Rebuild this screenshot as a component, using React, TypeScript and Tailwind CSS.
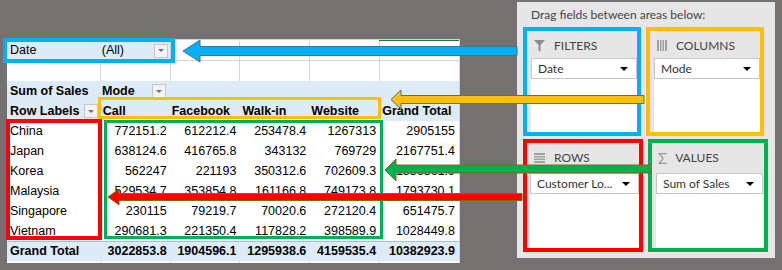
import React from "react";

const rows = [
  { name: "China", vals: ["772151.2", "612212.4", "253478.4", "1267313", "2905155"] },
  { name: "Japan", vals: ["638124.6", "416765.8", "343132", "769729", "2167751.4"] },
  { name: "Korea", vals: ["562247", "221193", "350312.6", "702609.3", "1836361.9"] },
  { name: "Malaysia", vals: ["529534.7", "353854.8", "161166.8", "749173.8", "1793730.1"] },
  { name: "Singapore", vals: ["230115", "79219.7", "70020.6", "272120.4", "651475.7"] },
  { name: "Vietnam", vals: ["290681.3", "221350.4", "117828.2", "398589.9", "1028449.8"] },
];

const totals = ["3022853.8", "1904596.1", "1295938.6", "4159535.4", "10382923.9"];

function DropBtn() {
  return (
    <div className="w-[14px] h-[14px] border border-[#c6c6c6] bg-[#f3f3f3] flex items-center justify-center">
      <div className="w-0 h-0 border-l-[3px] border-r-[3px] border-t-[3px] border-l-transparent border-r-transparent border-t-[#707070]" />
    </div>
  );
}

function Caret() {
  return <div className="w-0 h-0 border-l-[4px] border-r-[4px] border-t-[4px] border-l-transparent border-r-transparent border-t-black" />;
}

function FieldItem({ label }: { label: string }) {
  return (
    <div className="h-[21px] border border-[#c6c6c6] bg-white flex items-center justify-between pl-[6px] pr-[8px] text-[12px] text-[#333]">
      <span>{label}</span>
      <Caret />
    </div>
  );
}

function FunnelIcon() {
  return (
    <svg width="11" height="12" viewBox="0 0 11 12">
      <path d="M0 0H11L6.5 5V12L4.5 10.5V5Z" fill="#8c8c8c" />
    </svg>
  );
}

function ColumnsIcon() {
  return (
    <svg width="10" height="11" viewBox="0 0 10 11">
      <rect x="0" y="0" width="2" height="11" fill="#a0a0a0" />
      <rect x="3" y="0" width="1.5" height="11" fill="#a0a0a0" />
      <rect x="5.5" y="0" width="1.5" height="11" fill="#a0a0a0" />
      <rect x="8" y="0" width="2" height="11" fill="#a0a0a0" />
    </svg>
  );
}

function RowsIcon() {
  return (
    <svg width="11" height="10" viewBox="0 0 11 10">
      <rect x="0" y="0" width="11" height="2" fill="#a0a0a0" />
      <rect x="0" y="3" width="11" height="1.5" fill="#a0a0a0" />
      <rect x="0" y="5.5" width="11" height="1.5" fill="#a0a0a0" />
      <rect x="0" y="8" width="11" height="2" fill="#a0a0a0" />
    </svg>
  );
}

export default function App() {
  return (
    <div className="relative w-[782px] h-[270px] bg-[#757171] overflow-hidden flex font-['Liberation_Sans',Arial,sans-serif] text-black">
      {/* Pivot table sheet */}
      <div className="ml-[7px] mt-[39px] w-[453px] h-[224px] bg-white border-r border-[#d4d4d4] text-[12.5px] flex flex-col">
        <div className="flex h-[2px] border-t border-[#d4d4d4]">
          <div className="w-[373px]" />
          <div className="w-[80px] border-t border-[#217346]" />
        </div>

        {/* Date filter row */}
        <div className="flex h-[20px] border-b border-[#d4d4d4]">
          <div className="w-[93px] bg-[#ddebf7] pl-[3px] flex items-center">Date</div>
          <div className="w-[70px] bg-[#ddebf7] pl-[2px] pr-[2px] flex items-center justify-between">
            <span>(All)</span>
            <DropBtn />
          </div>
          <div className="w-[70px] border-l border-[#d4d4d4]" />
          <div className="w-[70px] border-l border-[#d4d4d4]" />
          <div className="w-[70px] border-l border-[#d4d4d4]" />
          <div className="w-[80px] border-l border-[#d4d4d4]" />
        </div>

        {/* empty row */}
        <div className="flex h-[20px]">
          <div className="w-[93px]" />
          <div className="w-[70px] border-l border-[#d4d4d4]" />
          <div className="w-[70px] border-l border-[#d4d4d4]" />
          <div className="w-[70px] border-l border-[#d4d4d4]" />
          <div className="w-[70px] border-l border-[#d4d4d4]" />
          <div className="w-[80px] border-l border-[#d4d4d4]" />
        </div>

        {/* Sum of Sales / Mode */}
        <div className="flex h-[20px] bg-[#ddebf7] font-bold items-center">
          <div className="w-[93px] pl-[3px]">Sum of Sales</div>
          <div className="w-[70px] pl-[2px] pr-[4px] flex items-center justify-between">
            <span>Mode</span>
            <DropBtn />
          </div>
        </div>

        {/* header row */}
        <div className="flex h-[20px] bg-[#ddebf7] font-bold items-center">
          <div className="w-[93px] pl-[3px] pr-[2px] flex items-center justify-between">
            <span>Row Labels</span>
            <DropBtn />
          </div>
          <div className="w-[70px] pl-[3px]">Call</div>
          <div className="w-[70px] pl-[2px]">Facebook</div>
          <div className="w-[70px] pl-[3px]">Walk-in</div>
          <div className="w-[70px] pl-[2px]">Website</div>
          <div className="w-[80px] pl-[3px]">Grand Total</div>
        </div>

        {rows.map((r) => (
          <div key={r.name} className="flex h-[20px] items-center">
            <div className="w-[93px] pl-[3px]">{r.name}</div>
            {r.vals.map((v, i) => (
              <div key={i} className={i === 4 ? "w-[80px] text-right pr-[4px]" : "w-[70px] text-right pr-[3px]"}>
                {v}
              </div>
            ))}
          </div>
        ))}

        <div className="flex h-[20px] items-center bg-[#ddebf7] border-t border-[#9bc2e6] font-bold">
          <div className="w-[93px] pl-[3px]">Grand Total</div>
          {totals.map((v, i) => (
            <div key={i} className={i === 4 ? "w-[80px] text-right pr-[4px]" : "w-[70px] text-right pr-[3px]"}>
              {v}
            </div>
          ))}
        </div>

        <div className="flex flex-1">
          <div className="w-[93px]" />
          <div className="w-[70px] border-l border-[#d4d4d4]" />
          <div className="w-[70px] border-l border-[#d4d4d4]" />
          <div className="w-[70px] border-l border-[#d4d4d4]" />
          <div className="w-[70px] border-l border-[#d4d4d4]" />
          <div className="w-[80px] border-l border-[#d4d4d4]" />
        </div>
      </div>

      {/* PivotTable fields panel */}
      <div className="ml-[57px] mt-[2px] w-[258px] h-[256px] bg-[#e6e6e6] pl-[6px] pt-[4px] flex flex-col font-['Lato',sans-serif] text-[#444]">
        <div className="h-[18px] leading-[18px] pl-[8px] text-[12px]">Drag fields between areas below:</div>

        <div className="flex gap-[5px] mt-[3px]">
          <div className="w-[118px] h-[109px] border-4 border-[#00b0f0] flex flex-col">
            <div className="h-[27px] pt-[2px] pl-[7px] flex items-center gap-[9px] text-[12px]">
              <FunnelIcon />
              <span>FILTERS</span>
            </div>
            <div className="flex-1 ml-[4px] bg-white">
              <FieldItem label="Date" />
            </div>
          </div>
          <div className="w-[118px] h-[109px] border-4 border-[#ffc000] flex flex-col">
            <div className="h-[27px] pt-[2px] pl-[7px] flex items-center gap-[9px] text-[12px]">
              <ColumnsIcon />
              <span>COLUMNS</span>
            </div>
            <div className="flex-1 ml-[4px] bg-white">
              <FieldItem label="Mode" />
            </div>
          </div>
        </div>

        <div className="flex gap-[5px] mt-[3px]">
          <div className="w-[120px] h-[113px] border-4 border-[#ff0000] flex flex-col">
            <div className="h-[30px] pl-[7px] flex items-center gap-[9px] text-[12px]">
              <RowsIcon />
              <span>ROWS</span>
            </div>
            <div className="flex-1 ml-[3px] bg-white">
              <FieldItem label="Customer Lo..." />
            </div>
          </div>
          <div className="w-[120px] h-[113px] border-4 border-[#00b050] flex flex-col">
            <div className="h-[30px] pl-[6px] flex items-center gap-[8px] text-[12px]">
              <span className="text-[15px] text-[#999] leading-none">Σ</span>
              <span>VALUES</span>
            </div>
            <div className="flex-1 ml-[4px] mr-[1px] bg-white">
              <FieldItem label="Sum of Sales" />
            </div>
          </div>
        </div>
      </div>

      {/* highlight boxes on the sheet */}
      <div className="absolute left-[3px] top-[38px] w-[172px] h-[25px] border-4 border-[#00b0f0]" />
      <div className="absolute left-[98px] top-[97px] w-[283px] h-[22px] border-[3px] border-[#ffc000]" />
      <div className="absolute left-[104px] top-[120px] w-[279px] h-[119px] border-[3px] border-[#00b050]" />
      <div className="absolute left-[6px] top-[119px] w-[96px] h-[121px] border-4 border-[#ff0000]" />

      {/* arrows */}
      <svg className="absolute left-0 top-0 pointer-events-none" width="782" height="270" viewBox="0 0 782 270">
        <polygon points="183,51 200,40 200,46.5 517,46.5 517,55.5 200,55.5 200,62" fill="#00b0f0" stroke="#41719c" strokeWidth="1" />
        <polygon points="391,99.5 401,90 401,95.5 644,95.5 644,103.5 401,103.5 401,109" fill="#ffc000" stroke="#41719c" strokeWidth="1" />
        <polygon points="385,170 396,159 396,165 650,165 650,173 396,173 396,181" fill="#00b050" stroke="#9c5a1c" strokeWidth="1" />
        <polygon points="108,197 119,189 119,193.5 522,193.5 522,200.5 119,200.5 119,205" fill="#ff0000" stroke="#7f6a00" strokeWidth="1" />
      </svg>
    </div>
  );
}
